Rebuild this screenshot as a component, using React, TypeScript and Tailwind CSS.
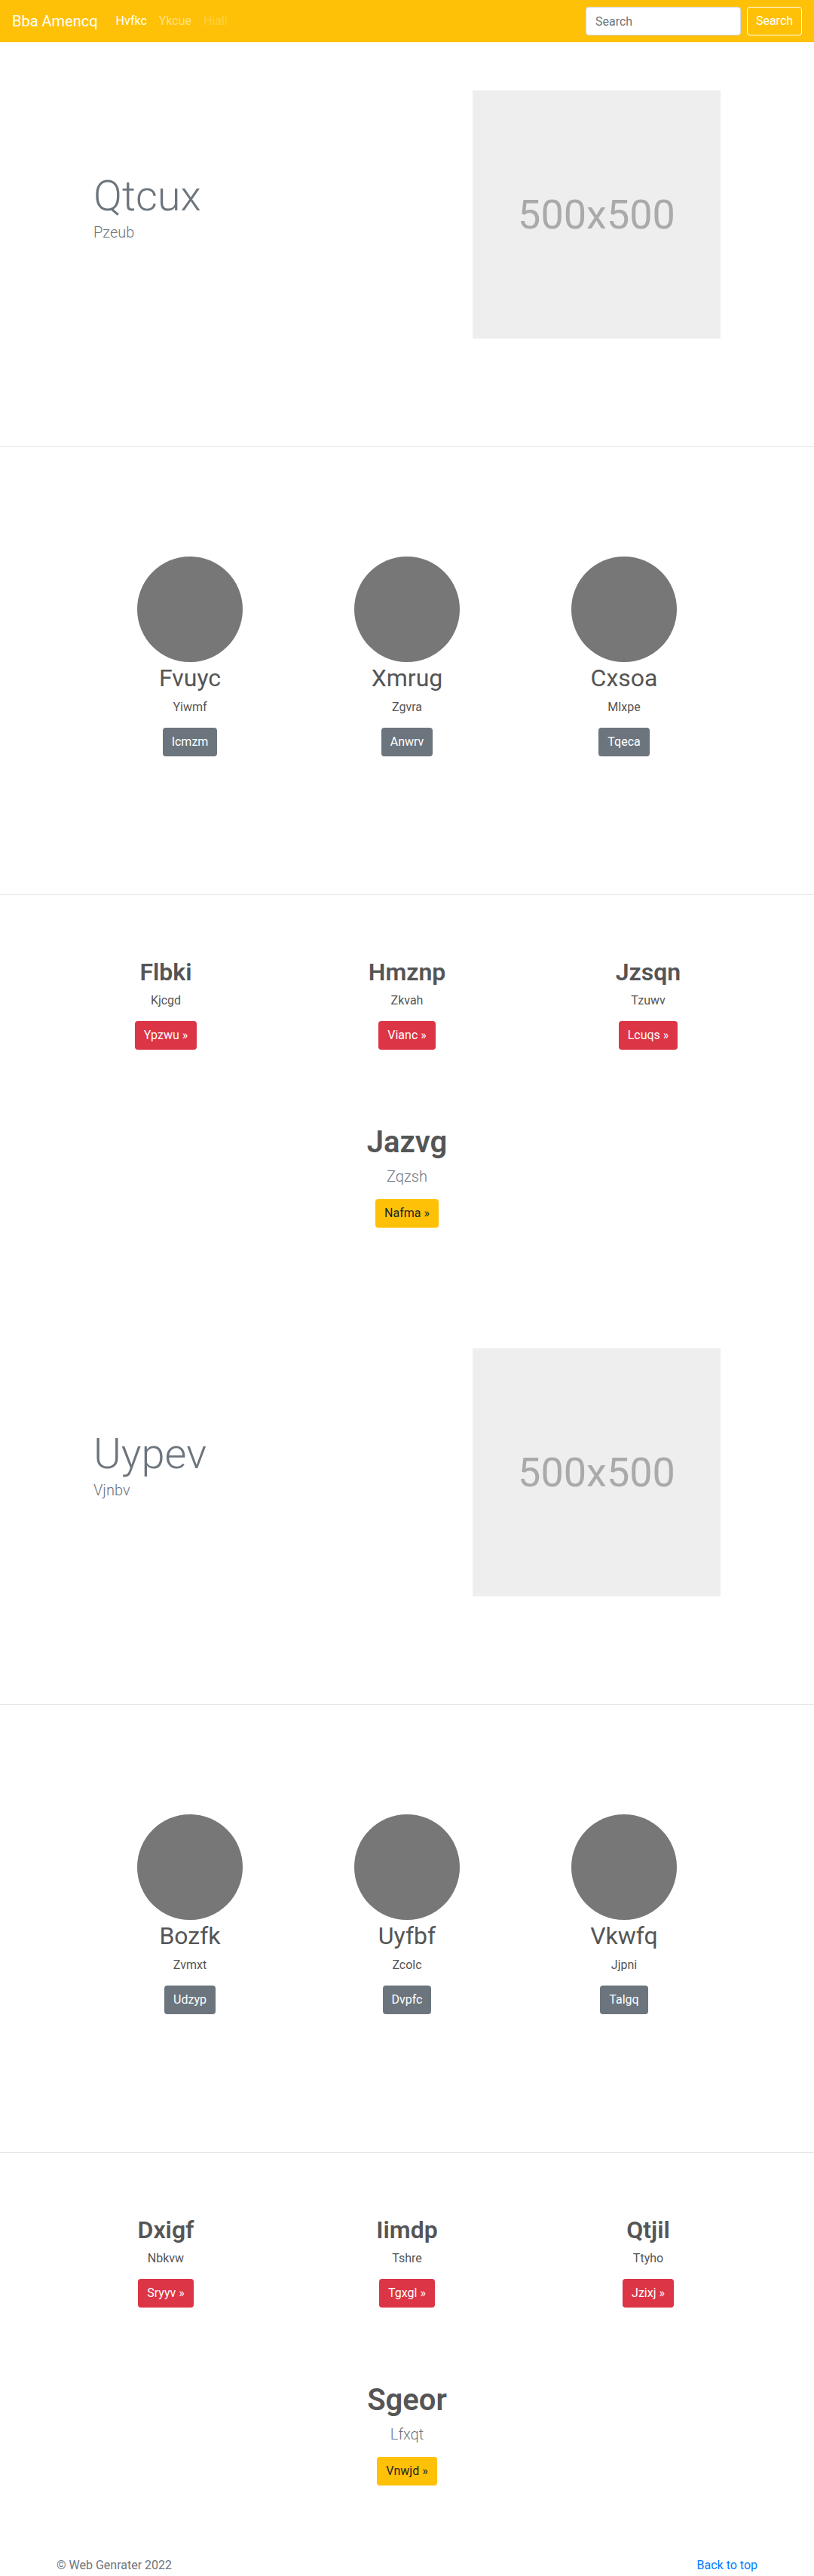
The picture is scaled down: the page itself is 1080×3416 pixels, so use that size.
import React from 'react';

const font = "font-['Segoe_UI',Roboto,'Helvetica_Neue',Arial,sans-serif]";

type Person = { name: string; sub: string; btn: string };
type Feature = { title: string; sub: string; btn: string };

const Navbar: React.FC = () => (
  <nav className="h-[56px] bg-[#ffc107] flex items-center px-4">
    <a className="text-[20px] leading-[30px] text-white mr-4">Bba Amencq</a>
    <ul className="flex">
      <li className="px-2 text-[16px] leading-[24px] text-white">Hvfkc</li>
      <li className="px-2 text-[16px] leading-[24px] text-white/50">Ykcue</li>
      <li className="px-2 text-[16px] leading-[24px] text-white/25">Hiali</li>
    </ul>
    <form className="ml-auto flex items-center">
      <input
        className="w-[206px] h-[38px] rounded border border-[#ced4da] bg-white px-3 text-[16px] text-[#495057] placeholder:text-[#6c757d] outline-none"
        placeholder="Search"
      />
      <button className="ml-2 h-[38px] w-[73px] rounded border border-white text-white text-[16px]">
        Search
      </button>
    </form>
  </nav>
);

const Hero: React.FC<{ title: string; sub: string }> = ({ title, sub }) => (
  <section className="pt-[64px] pb-[143px] border-b border-[#e5e5e5]">
    <div className="mx-auto w-[960px] px-[64px] flex items-center">
      <div className="flex-1">
        <h1 className="text-[56px] leading-[65px] font-light text-[#6c757d]">{title}</h1>
        <p className="text-[20px] leading-[30px] font-light text-[#6c757d] mb-[18px]">{sub}</p>
      </div>
      <div className="w-[329px] h-[329px] bg-[#eeeeee] flex items-center justify-center">
        <span className="text-[54px] text-[#aaaaaa]">500x500</span>
      </div>
    </div>
  </section>
);

const Circles: React.FC<{ items: Person[] }> = ({ items }) => (
  <section className="pt-[145px] pb-[183px] border-b border-[#e5e5e5]">
    <div className="mx-auto w-[864px] grid grid-cols-3">
      {items.map((p) => (
        <div key={p.name} className="flex flex-col items-center">
          <div className="w-[140px] h-[140px] rounded-full bg-[#777777]" />
          <h2 className="mt-[2px] text-[32px] leading-[38px] text-[#555555]">{p.name}</h2>
          <p className="mt-[8px] text-[16px] leading-[24px] text-[#555555]">{p.sub}</p>
          <a className="mt-[15px] h-[38px] px-3 flex items-center rounded bg-[#6c757d] text-white text-[16px]">
            {p.btn}
          </a>
        </div>
      ))}
    </div>
  </section>
);

const Features: React.FC<{ items: Feature[]; main: Feature; pb: string }> = ({ items, main, pb }) => (
  <section className={`pt-[83px] ${pb}`}>
    <div className="mx-auto w-[960px] grid grid-cols-3">
      {items.map((f) => (
        <div key={f.title} className="flex flex-col items-center">
          <h2 className="text-[32px] leading-[38px] font-semibold text-[#555555]">{f.title}</h2>
          <p className="mt-[7px] text-[16px] leading-[24px] text-[#555555]">{f.sub}</p>
          <a className="mt-[15px] h-[38px] px-3 flex items-center rounded bg-[#dc3545] text-white text-[16px]">
            {f.btn} »
          </a>
        </div>
      ))}
    </div>
    <div className="mt-[99px] flex flex-col items-center">
      <h1 className="text-[40px] leading-[48px] font-semibold text-[#555555]">{main.title}</h1>
      <p className="mt-[6px] text-[20px] leading-[30px] font-light text-[#6c757d]">{main.sub}</p>
      <a className="mt-[15px] h-[38px] px-3 flex items-center rounded bg-[#ffc107] text-[#212529] text-[16px]">
        {main.btn} »
      </a>
    </div>
  </section>
);

export default function App() {
  return (
    <div className={`${font} bg-white min-h-[3416px]`}>
      <Navbar />
      <Hero title="Qtcux" sub="Pzeub" />
      <Circles
        items={[
          { name: 'Fvuyc', sub: 'Yiwmf', btn: 'Icmzm' },
          { name: 'Xmrug', sub: 'Zgvra', btn: 'Anwrv' },
          { name: 'Cxsoa', sub: 'Mlxpe', btn: 'Tqeca' },
        ]}
      />
      <Features
        pb="pb-[96px]"
        items={[
          { title: 'Flbki', sub: 'Kjcgd', btn: 'Ypzwu' },
          { title: 'Hmznp', sub: 'Zkvah', btn: 'Vianc' },
          { title: 'Jzsqn', sub: 'Tzuwv', btn: 'Lcuqs' },
        ]}
        main={{ title: 'Jazvg', sub: 'Zqzsh', btn: 'Nafma' }}
      />
      <Hero title="Uypev" sub="Vjnbv" />
      <Circles
        items={[
          { name: 'Bozfk', sub: 'Zvmxt', btn: 'Udzyp' },
          { name: 'Uyfbf', sub: 'Zcolc', btn: 'Dvpfc' },
          { name: 'Vkwfq', sub: 'Jjpni', btn: 'Talgq' },
        ]}
      />
      <Features
        pb="pb-[94px]"
        items={[
          { title: 'Dxigf', sub: 'Nbkvw', btn: 'Sryyv' },
          { title: 'Iimdp', sub: 'Tshre', btn: 'Tgxgl' },
          { title: 'Qtjil', sub: 'Ttyho', btn: 'Jzixj' },
        ]}
        main={{ title: 'Sgeor', sub: 'Lfxqt', btn: 'Vnwjd' }}
      />
      <footer className="pb-[6px]">
        <div className="mx-auto w-[960px] px-[15px] flex justify-between text-[16px] leading-[24px]">
          <p className="text-[#6c757d]">© Web Genrater 2022</p>
          <a className="text-[#007bff]">Back to top</a>
        </div>
      </footer>
    </div>
  );
}
